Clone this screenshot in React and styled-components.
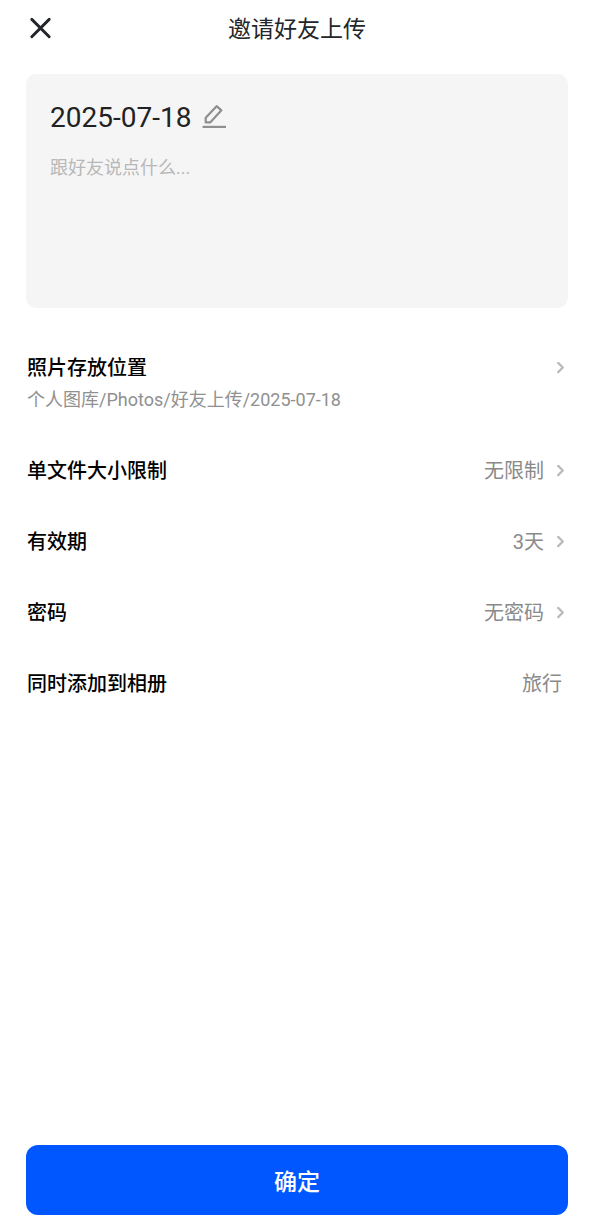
import React from "react";
import styled, { createGlobalStyle } from "styled-components";

const GlobalStyle = createGlobalStyle`
  *, *::before, *::after { box-sizing: border-box; }
  body {
    margin: 0;
    background: #fff;
    color: #000;
    font-family: Roboto, "Noto Sans CJK SC", sans-serif;
  }
  button, input, textarea { font: inherit; color: inherit; }
  button { cursor: pointer; }
`;

const Page = styled.div`
  display: flex;
  flex-direction: column;
  min-height: 100vh;
  padding: 0 28px 12px 26px;
`;

const Header = styled.header`
  display: grid;
  grid-template-columns: 28px 1fr 28px;
  align-items: center;
  height: 56px;
`;

const IconButton = styled.button`
  display: flex;
  align-items: center;
  justify-content: center;
  width: 28px;
  height: 28px;
  padding: 0;
  border: 0;
  background: none;
  color: ${(p) => p.$color};
`;

const Title = styled.h1`
  margin: 0;
  padding-top: 4px;
  color: #222529;
  font-size: 23px;
  font-weight: 400;
  line-height: 32px;
  text-align: center;
`;

const Card = styled.section`
  display: flex;
  flex-direction: column;
  gap: 16px;
  min-height: 234px;
  margin-top: 18px;
  padding: 26px 24px 24px;
  border-radius: 10px;
  background: #f5f5f5;
`;

const NameRow = styled.div`
  display: flex;
  align-items: center;
  gap: 10px;
`;

const Name = styled.h2`
  margin: 0;
  color: #222;
  font-size: 28px;
  font-weight: 400;
  line-height: 36px;
`;

const Message = styled.textarea`
  flex: 1;
  width: 100%;
  padding: 0;
  border: 0;
  outline: 0;
  resize: none;
  background: none;
  color: #222;
  font-size: 18px;
  line-height: 32px;

  &::placeholder { color: #b8b8b8; opacity: 1; }
`;

const Settings = styled.div`
  display: flex;
  flex-direction: column;
  margin-top: 25px;
  padding-left: 1px;
`;

const Row = styled.button`
  display: block;
  width: 100%;
  padding: 20px 0;
  border: 0;
  background: none;
  text-align: left;
`;

const RowLine = styled.span`
  display: flex;
  align-items: center;
  justify-content: space-between;
  font-size: 20px;
  line-height: 31px;
`;

const Label = styled.span`
  font-weight: 500;
`;

const Value = styled.span`
  display: flex;
  align-items: center;
  gap: 10px;
  padding-right: ${(p) => (p.$arrow ? 0 : 6)}px;
  color: #8a8a8a;
`;

const Path = styled.span`
  display: block;
  color: #909090;
  font-size: 18px;
  line-height: 32px;
`;

const Submit = styled.button`
  height: 70px;
  margin-top: auto;
  border: 0;
  border-radius: 12px;
  background: #0057ff;
  color: #fff;
  font-size: 23px;
  font-weight: 500;
`;

const CloseIcon = () => (
  <svg width="28" height="28" viewBox="0 0 28 28" fill="none" stroke="currentColor" strokeWidth="2.9" strokeLinecap="round" aria-hidden="true">
    <path d="M5.8 5.4 23.2 22.8M23.2 5.4 5.8 22.8" />
  </svg>
);

const EditIcon = () => (
  <svg width="28" height="28" viewBox="0 0 28 28" fill="none" stroke="currentColor" strokeWidth="2.2" strokeLinejoin="round" aria-hidden="true">
    <path d="M4.7 18.4V13.8L15.6 2.2L20.4 6.3L9.2 18.4Z" />
    <path d="M1.6 22.9H25" />
  </svg>
);

const Chevron = () => (
  <svg width="14" height="14" viewBox="0 0 14 14" fill="none" stroke="#b9b9b9" strokeWidth="2.2" strokeLinecap="round" strokeLinejoin="round" aria-hidden="true">
    <path d="M4.2 0.9 8.8 5.5 4.2 10.1" />
  </svg>
);

function SettingRow({ label, value, path, arrow = true }) {
  return (
    <Row type="button">
      <RowLine>
        <Label>{label}</Label>
        <Value $arrow={arrow}>
          {value}
          {arrow && <Chevron />}
        </Value>
      </RowLine>
      {path && <Path>{path}</Path>}
    </Row>
  );
}

export default function App() {
  return (
    <>
      <GlobalStyle />
      <Page>
        <Header>
          <IconButton type="button" aria-label="关闭" $color="#222529">
            <CloseIcon />
          </IconButton>
          <Title>邀请好友上传</Title>
        </Header>
        <Card>
          <NameRow>
            <Name>2025-07-18</Name>
            <IconButton type="button" aria-label="编辑名称" $color="#8f8f8f">
              <EditIcon />
            </IconButton>
          </NameRow>
          <Message aria-label="留言" placeholder="跟好友说点什么..." />
        </Card>
        <Settings>
          <SettingRow label="照片存放位置" path="个人图库/Photos/好友上传/2025-07-18" />
          <SettingRow label="单文件大小限制" value="无限制" />
          <SettingRow label="有效期" value="3天" />
          <SettingRow label="密码" value="无密码" />
          <SettingRow label="同时添加到相册" value="旅行" arrow={false} />
        </Settings>
        <Submit type="button">确定</Submit>
      </Page>
    </>
  );
}
